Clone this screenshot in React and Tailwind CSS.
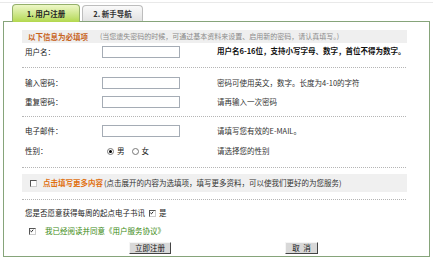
import React from "react";

const F = { fontFamily: '"Noto Sans CJK SC", "Noto Sans", sans-serif' };

function Input() {
  return <div className="w-[78px] h-[12px] border border-[#a5acb5] bg-white" />;
}

function Dotted() {
  return <div className="ml-[18px] w-[384px] border-t border-dotted border-[#b5b5b5]" />;
}

function Check({ checked }) {
  return (
    <div className="w-[7px] h-[7px] border border-t-[#555] border-l-[#555] border-b-[#ccc] border-r-[#ccc] bg-white relative">
      {checked && (
        <svg viewBox="0 0 7 7" className="absolute inset-0 w-[5px] h-[5px]">
          <path d="M0.5 2.5 L2 4 L4.5 1" stroke="#000" strokeWidth="1.2" fill="none" />
        </svg>
      )}
    </div>
  );
}

function Radio({ checked }) {
  return (
    <div className="w-[7px] h-[7px] rounded-full border border-[#777] bg-white flex items-center justify-center">
      {checked && <div className="w-[3px] h-[3px] rounded-full bg-black" />}
    </div>
  );
}

function Row({ label, mt, children, help, helpBold }) {
  return (
    <div className={`flex items-center h-[12px] ${mt}`}>
      <div className="w-[77px] ml-[21px] text-[7.5px] text-[#222] leading-none">{label}</div>
      <div className="w-[78px]">{children}</div>
      <div
        className={`ml-[37px] text-[7.5px] leading-none ${
          helpBold ? "font-semibold text-[#111] -mt-[3px]" : "text-[#333]"
        }`}
      >
        {help}
      </div>
    </div>
  );
}

export default function App() {
  return (
    <div className="w-[433px] h-[263px] bg-white overflow-hidden" style={F}>
      <div className="pt-[2px]">
        <div className="h-px bg-[#e9e9e9]" />
      </div>
      <div className="flex items-end h-[17px] pl-[12px] gap-[2px] mt-[1px]">
        <div className="relative z-10 -mb-px w-[68px] h-[18px] rounded-t-[4px] border border-b-0 border-[#94b06a] bg-gradient-to-b from-[#eef7c6] to-[#b3d84c] flex items-center justify-center">
          <span className="text-[7.5px] font-bold text-[#222] leading-none">1. 用户注册</span>
        </div>
        <div className="w-[61px] h-[16px] rounded-t-[4px] border border-b-0 border-[#bdbdbd] bg-gradient-to-b from-[#fafafa] to-[#e2e2e2] flex items-center justify-center">
          <span className="text-[7.5px] font-bold text-[#333] leading-none">2. 新手导航</span>
        </div>
      </div>
      <div className="ml-[3px] w-[427px] h-[236px] border border-[#86a47a]">
        <div className="mt-[8px] ml-[18px] w-[385px] h-[13px] bg-[#efefef] flex items-center">
          <span className="ml-[6px] text-[7.5px] font-bold text-[#c8641e] leading-none">以下信息为必填项</span>
          <span className="ml-[12px] text-[7px] text-[#8a8a8a] leading-none">
            (当您遗失密码的时候，可通过基本资料来设置、启用新的密码，请认真填写。)
          </span>
        </div>
        <Row label="用户名：" mt="mt-[3px]" help="用户名6-16位，支持小写字母、数字，首位不得为数字。" helpBold>
          <Input />
        </Row>
        <div className="mt-[9px]">
          <Dotted />
        </div>
        <Row label="输入密码：" mt="mt-[9px]" help="密码可使用英文，数字。长度为4-10的字符">
          <Input />
        </Row>
        <Row label="重复密码：" mt="mt-[7px]" help="请再输入一次密码">
          <Input />
        </Row>
        <div className="mt-[8px]">
          <Dotted />
        </div>
        <Row label="电子邮件：" mt="mt-[8px]" help="请填写您有效的E-MAIL。">
          <Input />
        </Row>
        <Row label="性别：" mt="mt-[8px]" help="请选择您的性别">
          <div className="flex items-center ml-[5px] text-[7.5px] leading-none text-[#222]">
            <Radio checked />
            <span className="ml-[3px]">男</span>
            <div className="ml-[7px]">
              <Radio />
            </div>
            <span className="ml-[3px]">女</span>
          </div>
        </Row>
        <div className="mt-[10px]">
          <Dotted />
        </div>
        <div className="mt-[6px] ml-[18px] w-[385px] h-[18px] bg-[#f0f0f0] flex items-center">
          <div className="ml-[8px]">
            <Check />
          </div>
          <span className="ml-[6px] text-[7.5px] font-bold text-[#e07010] leading-none">点击填写更多内容</span>
          <span className="ml-[1px] text-[7.5px] text-[#333] leading-none">
            (点击展开的内容为选填项，填写更多资料，可以使我们更好的为您服务)
          </span>
        </div>
        <div className="mt-[7px]">
          <Dotted />
        </div>
        <div className="mt-[7px] h-[12px] flex items-center ml-[21px] text-[7.5px] leading-none text-[#222]">
          <span>您是否愿意获得每周的起点电子书讯</span>
          <div className="ml-[4px]">
            <Check checked />
          </div>
          <span className="ml-[3px]">是</span>
        </div>
        <div className="mt-[6px] h-[12px] flex items-center ml-[25px] text-[7.5px] leading-none">
          <Check checked />
          <span className="ml-[9px] text-[#3a8a10]">我已经阅读并同意《用户服务协议》</span>
        </div>
        <div className="mt-[5px] h-[12px] flex items-center">
          <div className="ml-[125px] w-[42px] h-[12px] bg-[#d8d8d8] border border-t-[#f5f5f5] border-l-[#f5f5f5] border-b-[#444] border-r-[#444] flex items-center justify-center text-[7.5px] leading-none text-[#111]">
            立即注册
          </div>
          <div className="ml-[114px] w-[33px] h-[12px] bg-[#d8d8d8] border border-t-[#f5f5f5] border-l-[#f5f5f5] border-b-[#444] border-r-[#444] flex items-center justify-center text-[7.5px] leading-none text-[#111]">
            取&nbsp;&nbsp;消
          </div>
        </div>
      </div>
    </div>
  );
}
